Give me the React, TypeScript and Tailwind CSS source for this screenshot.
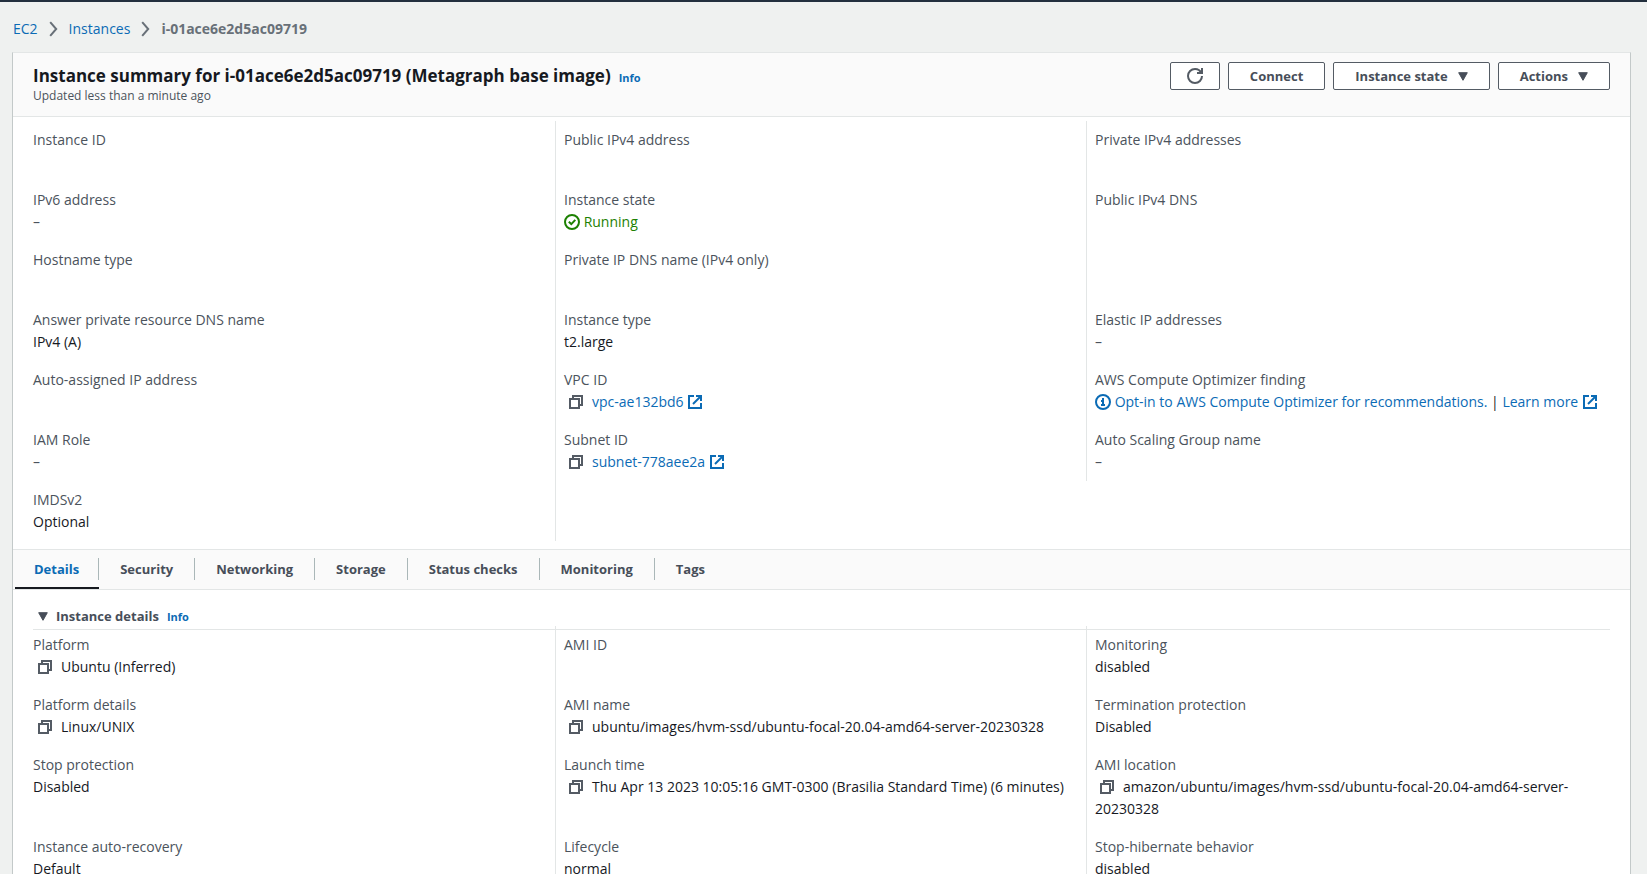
import type { ReactNode } from "react";

const LINK = "text-[#0b6bb5] hover:underline";

function CopyIcon() {
  return (
    <svg width="16" height="16" viewBox="0 0 16 16" fill="none" stroke="#545b64" strokeWidth="2" aria-hidden="true">
      <path d="M2 5h9v9H2z" />
      <path d="M5 5V2h9v9h-3" />
    </svg>
  );
}

function ExternalIcon() {
  return (
    <svg className="inline-block align-[-3px]" width="16" height="16" viewBox="0 0 16 16" fill="none" stroke="#0b6bb5" strokeWidth="2" aria-hidden="true">
      <path d="M7 2H2v12h12V9" />
      <path d="M9 2h5v5" />
      <path d="M6 10l8-8" />
    </svg>
  );
}

function RunningIcon() {
  return (
    <svg className="inline-block align-[-3px]" width="16" height="16" viewBox="0 0 16 16" fill="none" stroke="#1d8102" strokeWidth="2" aria-hidden="true">
      <circle cx="8" cy="8" r="7" />
      <path d="M4.8 7.8l2.5 2.3 4-4.2" />
    </svg>
  );
}

function InfoIcon() {
  return (
    <svg className="inline-block align-[-3px]" width="16" height="16" viewBox="0 0 16 16" fill="none" stroke="#0b6bb5" strokeWidth="2" aria-hidden="true">
      <circle cx="8" cy="8" r="7" />
      <path d="M8 11V7H6" />
      <path d="M10 11H6" />
      <path d="M8 6V4" />
    </svg>
  );
}

function Caret() {
  return (
    <svg width="10" height="9" viewBox="0 0 10 9" fill="#474e59" stroke="#474e59" strokeLinejoin="round" aria-hidden="true">
      <path d="M0.7 0.7h8.6L5 8.3z" />
    </svg>
  );
}

function Chevron() {
  return (
    <svg className="mx-[11px]" width="9" height="16" viewBox="0 0 9 16" fill="none" stroke="#687078" strokeWidth="2" aria-hidden="true">
      <path d="M1.2 1.2L7.2 8L1.2 14.8" />
    </svg>
  );
}

function Copyable({ name, children }: { name: string; children: ReactNode }) {
  return (
    <>
      <button type="button" aria-label={`Copy ${name}`} className="ml-1 mr-2 inline-block align-[-3px]">
        <CopyIcon />
      </button>
      {children}
    </>
  );
}

function ResourceLink({ id }: { id: string }) {
  return (
    <Copyable name={id}>
      <a href="#" className={LINK}>
        {id} <ExternalIcon />
      </a>
    </Copyable>
  );
}

type Field = { label: string; value?: ReactNode };

const dash = <span className="text-[#4b535c]">–</span>;

const summary: Field[][] = [
  [
    { label: "Instance ID" },
    { label: "IPv6 address", value: dash },
    { label: "Hostname type" },
    { label: "Answer private resource DNS name", value: "IPv4 (A)" },
    { label: "Auto-assigned IP address" },
    { label: "IAM Role", value: dash },
    { label: "IMDSv2", value: "Optional" },
  ],
  [
    { label: "Public IPv4 address" },
    {
      label: "Instance state",
      value: (
        <span className="text-[#1d8102]">
          <RunningIcon /> Running
        </span>
      ),
    },
    { label: "Private IP DNS name (IPv4 only)" },
    { label: "Instance type", value: "t2.large" },
    { label: "VPC ID", value: <ResourceLink id="vpc-ae132bd6" /> },
    { label: "Subnet ID", value: <ResourceLink id="subnet-778aee2a" /> },
  ],
  [
    { label: "Private IPv4 addresses" },
    { label: "Public IPv4 DNS" },
    // The row keeps its place in the column with nothing to show.
    { label: "" },
    { label: "Elastic IP addresses", value: dash },
    {
      label: "AWS Compute Optimizer finding",
      value: (
        <>
          <a href="#" className={LINK}>
            <InfoIcon /> Opt-in to AWS Compute Optimizer for recommendations.
          </a>{" "}
          |{" "}
          <a href="#" className={LINK}>
            Learn more <ExternalIcon />
          </a>
        </>
      ),
    },
    { label: "Auto Scaling Group name", value: dash },
  ],
];

const AMI_NAME = "ubuntu/images/hvm-ssd/ubuntu-focal-20.04-amd64-server-20230328";

const details: Field[][] = [
  [
    { label: "Platform", value: <Copyable name="platform">Ubuntu (Inferred)</Copyable> },
    { label: "Platform details", value: <Copyable name="platform details">Linux/UNIX</Copyable> },
    { label: "Stop protection", value: "Disabled" },
    { label: "Instance auto-recovery", value: "Default" },
  ],
  [
    { label: "AMI ID" },
    { label: "AMI name", value: <Copyable name="AMI name">{AMI_NAME}</Copyable> },
    {
      label: "Launch time",
      value: (
        <Copyable name="launch time">
          Thu Apr 13 2023 10:05:16 GMT-0300 (Brasilia Standard Time) (6 minutes)
        </Copyable>
      ),
    },
    { label: "Lifecycle", value: "normal" },
  ],
  [
    { label: "Monitoring", value: "disabled" },
    { label: "Termination protection", value: "Disabled" },
    { label: "AMI location", value: <Copyable name="AMI location">{`amazon/${AMI_NAME}`}</Copyable> },
    { label: "Stop-hibernate behavior", value: "disabled" },
  ],
];

function FieldGrid({ columns, className }: { columns: Field[][]; className: string }) {
  const rows = Math.max(...columns.map((c) => c.length));
  const cells: ReactNode[] = [];
  for (let r = 0; r < rows; r++) {
    columns.forEach((column, c) => {
      const field = column[r];
      const line = c > 0 && (field || c === 1) ? "border-[#e3e6e6]" : "border-transparent";
      cells.push(
        <div key={`${r}-${c}`} className={`min-h-15 border-l px-2 py-2 ${line}`}>
          {field?.label && (
            <>
              <dt className="text-[#4b535c]">{field.label}</dt>
              <dd>{field.value}</dd>
            </>
          )}
        </div>
      );
    });
  }
  return <dl className={`-ml-[9px] -mr-[7px] grid grid-cols-3 ${className}`}>{cells}</dl>;
}

const BUTTON =
  "flex h-7 items-center gap-2.5 rounded-xs border border-[#545b64] bg-white px-[21px] text-[13px] font-bold text-[#474e59]";

const tabs = ["Details", "Security", "Networking", "Storage", "Status checks", "Monitoring", "Tags"];

export default function App() {
  return (
    <div className="h-screen overflow-hidden border-t-2 border-[#232f3e] bg-[#eff1f0] font-['Open_Sans','Noto_Sans',sans-serif] text-sm leading-[22px] text-[#16191f]">
      <nav aria-label="Breadcrumb" className="flex h-[50px] items-center pl-[13px] pt-1">
        <a href="#" className={LINK}>EC2</a>
        <Chevron />
        <a href="#" className={LINK}>Instances</a>
        <Chevron />
        <span className="font-bold text-[#687078]">i-01ace6e2d5ac09719</span>
      </nav>

      <main className="ml-3 mr-4 border-x border-t border-x-[#c3c9c9] border-t-[#e3e6e6] bg-white">
        <header className="flex items-start justify-between border-b border-[#e3e6e6] bg-[#fafafa] px-5 pb-[11px] pt-[9px]">
          <div className="pt-[3px]">
            <div className="flex items-baseline gap-2">
              <h1 className="text-[17px] font-bold leading-[22px]">
                Instance summary for i-01ace6e2d5ac09719 (Metagraph base image)
              </h1>
              <a href="#" className={`text-[11px] font-bold leading-none ${LINK}`}>Info</a>
            </div>
            <p className="text-xs leading-[18px] text-[#4b535c]">Updated less than a minute ago</p>
          </div>
          <div className="flex gap-2">
            <button type="button" aria-label="Refresh" className="flex h-7 w-[50px] items-center justify-center rounded-xs border border-[#545b64] bg-white">
              <svg width="16" height="16" viewBox="0 0 16 16" fill="none" stroke="#545b64" strokeWidth="2" aria-hidden="true">
                <path d="M10 5h5V0" />
                <path d="M15 8a7 7 0 1 1-7-7 6.9 6.9 0 0 1 6.3 4" />
              </svg>
            </button>
            <button type="button" className={BUTTON}>Connect</button>
            <button type="button" className={BUTTON}>Instance state <Caret /></button>
            <button type="button" className={BUTTON}>Actions <Caret /></button>
          </div>
        </header>

        <section aria-label="Instance summary" className="px-5">
          <FieldGrid columns={summary} className="pb-2 pt-1" />
        </section>

        <div role="tablist" className="flex border-y border-[#e3e6e6] bg-[#fafafa] pl-0.5">
          {tabs.map((tab, i) => (
            <button
              key={tab}
              type="button"
              role="tab"
              aria-selected={i === 0}
              className={`border-b-2 pb-[7px] pt-2 text-[13px] font-bold ${
                i === 0 ? "border-[#16191f] text-[#0b6bb5]" : "border-transparent text-[#474e59]"
              }`}
            >
              <span
                className={`block h-[22px] ${i === 0 ? "px-[19px]" : "px-[21px]"} ${
                  i < tabs.length - 1 ? "border-r border-[#aab7b8]" : ""
                }`}
              >
                {tab}
              </span>
            </button>
          ))}
        </div>

        <section aria-label="Instance details" className="px-5">
          <div className="flex items-baseline gap-2 border-b border-[#e3e6e6] pb-0.5 pt-[15px]">
            <button type="button" aria-expanded="true" className="flex items-center gap-2 pl-[5px] text-[13px] font-bold text-[#474e59]">
              <Caret />
              Instance details
            </button>
            <a href="#" className={`text-[11px] font-bold leading-none ${LINK}`}>Info</a>
          </div>
          <FieldGrid columns={details} className="-mt-1" />
        </section>
      </main>
    </div>
  );
}
